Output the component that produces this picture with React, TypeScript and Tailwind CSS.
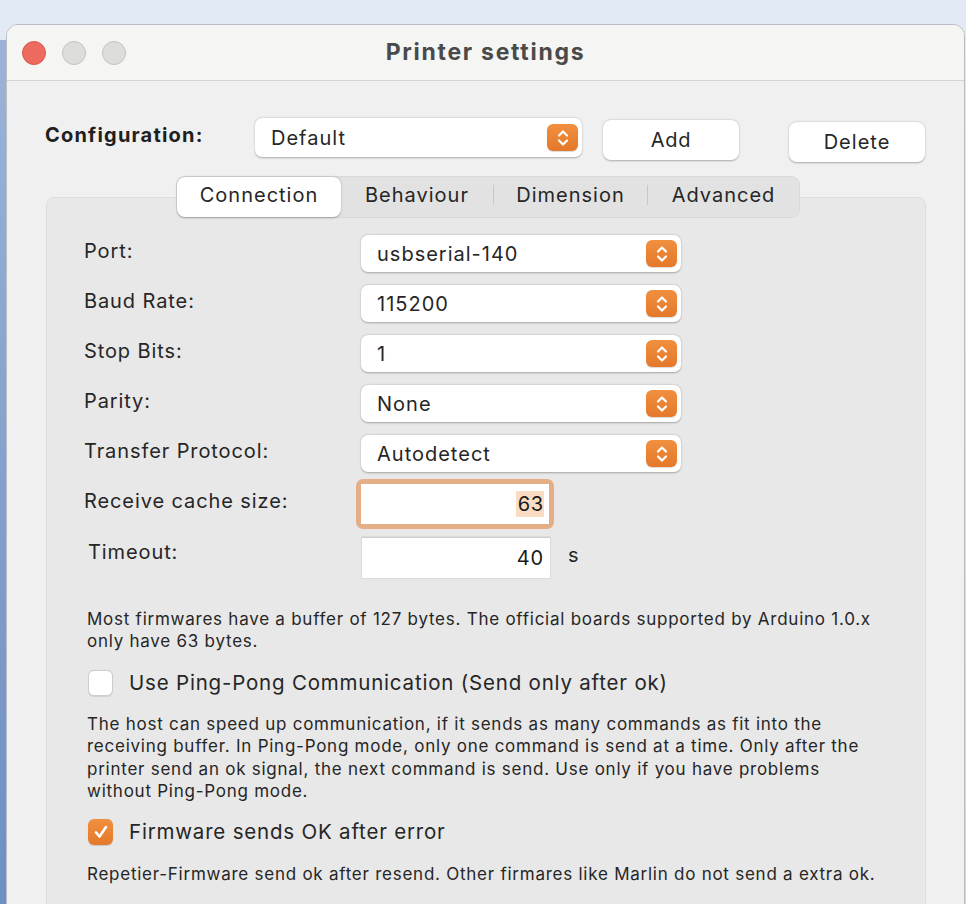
import React from "react";

const font = { fontFamily: "Inter, 'Noto Sans', sans-serif" };

function Stepper() {
  return (
    <div className="flex h-[27px] w-[31px] items-center justify-center rounded-[6px] bg-gradient-to-b from-[#f0903f] to-[#e5782a] shadow-[0_1px_1px_rgba(0,0,0,0.15)]">
      <svg width="14" height="20" viewBox="0 0 14 20" fill="none" stroke="white" strokeWidth="2.2" strokeLinecap="round" strokeLinejoin="round">
        <path d="M3 7.5 L7 3.5 L11 7.5" />
        <path d="M3 12.5 L7 16.5 L11 12.5" />
      </svg>
    </div>
  );
}

function Select({ value, w, h = 37 }: { value: string; w: number; h?: number }) {
  return (
    <div
      className="flex items-center justify-between rounded-[7px] bg-white pl-[16px] pr-[4px] text-[20px] tracking-[1px] text-[#262626] shadow-[0_0.5px_2px_rgba(0,0,0,0.3)]"
      style={{ width: w, height: h }}
    >
      <span>{value}</span>
      <Stepper />
    </div>
  );
}

function Row({ label, value }: { label: string; value: string }) {
  return (
    <div className="flex h-[50px] items-start">
      <div className="w-[277px] pt-[1px] text-[20px] tracking-[0.9px] text-[#262626]">{label}</div>
      <Select value={value} w={320} />
    </div>
  );
}

export default function App() {
  return (
    <div className="relative h-[904px] w-[966px] overflow-hidden bg-gradient-to-b from-[#e2eaf5] to-[#c9d6ea]" style={font}>
      <div className="absolute left-0 top-[40px] h-[864px] w-[6px] bg-gradient-to-b from-[#9bb3d6] to-[#6e8fc4]" />
      <div className="absolute left-[6px] top-[24px] h-[900px] w-[959px] overflow-hidden rounded-t-[12px] border border-[#b8bcc3] bg-[#f0f0f0]">
        {/* title bar */}
        <div className="relative flex h-[56px] items-center border-b border-[#d3d3d3] bg-[#f5f5f4]">
          <div className="flex gap-[16px] pl-[15px]">
            <div className="h-[24px] w-[24px] rounded-full border border-[#d8574c] bg-[#ed6a5e]" />
            <div className="h-[24px] w-[24px] rounded-full border border-[#c2c2c2] bg-[#dddddc]" />
            <div className="h-[24px] w-[24px] rounded-full border border-[#c2c2c2] bg-[#dddddc]" />
          </div>
          <div className="absolute left-0 right-0 text-center text-[23px] font-bold tracking-[1.7px] text-[#4a4a4a]">
            Printer settings
          </div>
        </div>

        {/* configuration row */}
        <div className="mt-[37px] flex items-start">
          <div className="w-[248px] pl-[38px] pt-[2px] text-[20px] font-bold tracking-[1.2px] text-[#1f1f1f]">Configuration:</div>
          <Select value="Default" w={327} h={39} />
          <button className="ml-[21px] mt-[2px] h-[40px] w-[136px] rounded-[8px] bg-white text-[20px] tracking-[0.8px] text-[#262626] shadow-[0_0.5px_2px_rgba(0,0,0,0.3)]">
            Add
          </button>
          <button className="ml-[50px] mt-[4px] h-[40px] w-[136px] rounded-[8px] bg-white text-[20px] tracking-[1px] text-[#262626] shadow-[0_0.5px_2px_rgba(0,0,0,0.3)]">
            Delete
          </button>
        </div>

        {/* tabs */}
        <div className="relative z-10 ml-[169px] mt-[14px] flex h-[42px] w-[624px] items-center rounded-[9px] bg-[#e2e2e2] pb-[5px] text-[20px] tracking-[1px] text-[#262626] shadow-[inset_0_0_0_1px_rgba(0,0,0,0.04)]">
          <div className="ml-[1px] mt-[5px] flex h-[40px] w-[164px] items-center justify-center rounded-[8px] bg-white pb-[5px] shadow-[0_0.5px_2px_rgba(0,0,0,0.3)]">
            Connection
          </div>
          <div className="flex w-[152px] items-center justify-center">Behaviour</div>
          <div className="h-[20px] w-px bg-[#c8c8c8]" />
          <div className="flex w-[153px] items-center justify-center">Dimension</div>
          <div className="h-[20px] w-px bg-[#c8c8c8]" />
          <div className="flex w-[151px] items-center justify-center">Advanced</div>
        </div>

        {/* panel */}
        <div className="ml-[39px] mt-[-21px] h-[800px] w-[880px] rounded-[8px] border border-[#dddddd] bg-[#e8e8e8] pl-[37px] pt-[37px] text-[#262626]">
          <Row label="Port:" value="usbserial-140" />
          <Row label="Baud Rate:" value="115200" />
          <Row label="Stop Bits:" value="1" />
          <Row label="Parity:" value="None" />
          <Row label="Transfer Protocol:" value="Autodetect" />

          <div className="mt-[-6px] flex items-start">
            <div className="w-[272px] pt-[7px] text-[20px] tracking-[0.9px]">Receive cache size:</div>
            <div className="rounded-[7px] border-[5px] border-[#e6ae86] bg-[#e6ae86]">
              <div className="flex h-[40px] w-[188px] items-center justify-end bg-white pr-[5px] text-[20px] tracking-[0.8px] text-[#1a1a1a]">
                <span className="bg-[#f9dcc2] pl-[2px] leading-[26px]">63</span>
              </div>
            </div>
          </div>

          <div className="mt-[8px] flex items-start">
            <div className="w-[278px] pl-[4px] text-[20px] tracking-[0.9px]">Timeout:</div>
            <div className="flex h-[41px] w-[188px] items-center justify-end border-t border-[#cfcfcf] bg-white pr-[6px] text-[20px] tracking-[0.8px] text-[#1a1a1a] shadow-[0_0_0_0.5px_rgba(0,0,0,0.12)]">
              40
            </div>
            <div className="ml-[18px] pt-[3px] text-[20px]">s</div>
          </div>

          <div className="mt-[30px] pl-[3px] text-[17px] leading-[22px] tracking-[0.75px] text-[#262626]">
            Most firmwares have a buffer of 127 bytes. The official boards supported by Arduino 1.0.x
            <br />
            only have 63 bytes.
          </div>

          <div className="mt-[16px] flex items-center">
            <div className="ml-[4px] h-[26px] w-[25px] rounded-[6px] border border-[#cdcdcd] bg-white shadow-[0_0.5px_1px_rgba(0,0,0,0.1)]" />
            <div className="ml-[16px] text-[20.5px] tracking-[0.8px]">Use Ping-Pong Communication (Send only after ok)</div>
          </div>

          <div className="mt-[14px] pl-[3px] text-[17px] leading-[22.5px] tracking-[0.75px]">
            The host can speed up communication, if it sends as many commands as fit into the
            <br />
            receiving buffer. In Ping-Pong mode, only one command is send at a time. Only after the
            <br />
            printer send an ok signal, the next command is send. Use only if you have problems
            <br />
            without Ping-Pong mode.
          </div>

          <div className="mt-[14px] flex items-center">
            <div className="ml-[4px] flex h-[26px] w-[25px] items-center justify-center rounded-[6px] bg-gradient-to-b from-[#f0903f] to-[#e5782a] shadow-[0_0.5px_1px_rgba(0,0,0,0.15)]">
              <svg width="16" height="16" viewBox="0 0 16 16" fill="none" stroke="white" strokeWidth="2.6" strokeLinecap="round" strokeLinejoin="round">
                <path d="M3 8.5 L6.5 12.5 L13 3" />
              </svg>
            </div>
            <div className="ml-[16px] text-[20.5px] tracking-[0.8px]">Firmware sends OK after error</div>
          </div>

          <div className="mt-[15px] pl-[3px] text-[17px] leading-[22px] tracking-[0.75px]">
            Repetier-Firmware send ok after resend. Other firmares like Marlin do not send a extra ok.
          </div>
        </div>
      </div>
    </div>
  );
}
